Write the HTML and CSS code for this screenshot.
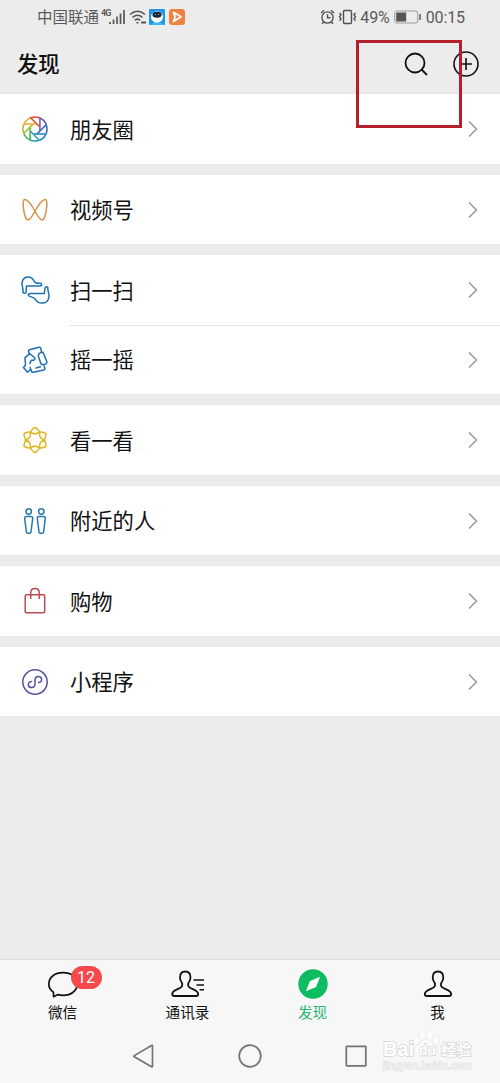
FILE: index.html
```html
<!DOCTYPE html>
<html lang="zh-CN">
<head>
<meta charset="utf-8">
<title>发现</title>
<link rel="stylesheet" href="styles.css">
</head>
<body>
<div class="phone">
  <div class="status">
    <span class="carrier">中国联通</span>
    <span class="net">4G</span>
    <svg class="signal" width="16" height="16" viewBox="0 0 16 16" stroke="#555" stroke-width="1.7"><path d="M1 13v2M4.5 10.500v4.500M8 7.500V15M11.500 4.500V15M15 1v14"/></svg>
    <svg class="wifi" width="18" height="16" viewBox="0 0 18 16" fill="none" stroke="#555" stroke-width="1.600"><path d="M1 5.500Q8.500-1 16 5.500M3.500 8.500Q8.500 4 13.500 8.500M6 11.300Q8.500 9 11 11.300"/><path d="M8.500 13v1.500M12 13.500h5" stroke-width="2"/></svg>
    <svg class="app" width="16" height="16" viewBox="0 0 16 16"><rect width="16" height="16" rx="1" fill="#2496e8"/><path d="M1 16q7-7 14 0z" fill="#38b6ee"/><ellipse cx="8" cy="8" rx="6" ry="5.800" fill="#fff"/><ellipse cx="8" cy="5.800" rx="4.600" ry="3" fill="#172330"/><circle cx="6.500" cy="5.500" r=".6" fill="#bde"/><circle cx="9.500" cy="5.500" r=".6" fill="#bde"/></svg>
    <svg class="app2" width="16" height="16" viewBox="0 0 16 16"><rect width="16" height="16" rx="3" fill="#ee8240"/><path d="M4.500 3.200L12 7.800L4.500 12.500L6 8z" fill="none" stroke="#fff" stroke-width="1.700" stroke-linejoin="round"/></svg>
    <span class="grow"></span>
    <svg width="16" height="16" viewBox="0 0 16 16" fill="none" stroke="#505050" stroke-width="1.400"><circle cx="7.500" cy="8.500" r="5.600"/><path d="M1 4l3-2.800M11 1.200L14 4M7.500 5.300v3.500h3M3.500 13L2 14.700M11.500 13l1.500 1.700"/></svg>
    <svg class="vibrate" width="19" height="16" viewBox="0 0 19 16" fill="none" stroke="#505050" stroke-width="1.400"><rect x="5.500" y="1.500" width="8" height="13" rx="1.200"/><path d="M1.500 4l1.500 1.800l-1.500 2l1.500 2l-1.500 2M17.500 4l-1.500 1.800l1.500 2l-1.500 2l1.500 2"/></svg>
    <span class="digits">49%</span>
    <svg class="battery" width="28" height="14" viewBox="0 0 28 14"><rect x=".7" y="1" width="23" height="12" rx="2" fill="none" stroke="#999"/><rect x="2.200" y="2.500" width="10" height="9" fill="#555"/><path d="M26 4v6" stroke="#666" stroke-width="1.600"/></svg>
    <span class="digits">00:15</span>
  </div>

  <header class="header">
    <h1>发现</h1>
    <svg class="search" width="26" height="26" viewBox="0 0 26 26" fill="none" stroke="#111" stroke-width="1.800"><circle cx="12" cy="12" r="9.500"/><path d="M18.500 18.500l5.500 5.500"/></svg>
    <svg width="26" height="26" viewBox="0 0 26 26" fill="none" stroke="#111" stroke-width="1.600"><circle cx="13" cy="13" r="12"/><path d="M13 7v12M7 13h12"/></svg>
  </header>

  <main class="list">
    <section class="group">
      <div class="row">
        <svg class="icon" viewBox="-15 -15 30 30" fill="none" stroke-width="1.500">
          <defs><path id="blade" d="M4.900 2V-11A12 12 0 0 1 11.300-4.300"/></defs>
          <use href="#blade" stroke="#6a59b3"/><use href="#blade" stroke="#3d6dc4" transform="rotate(45)"/><use href="#blade" stroke="#1e82c6" transform="rotate(90)"/><use href="#blade" stroke="#25a3b8" transform="rotate(135)"/><use href="#blade" stroke="#3eb34a" transform="rotate(180)"/><use href="#blade" stroke="#a9c22f" transform="rotate(225)"/><use href="#blade" stroke="#ecac2c" transform="rotate(270)"/><use href="#blade" stroke="#db4f43" transform="rotate(315)"/>
        </svg>
        <span>朋友圈</span><svg class="arrow" viewBox="0 0 10 18"><path d="M1 1.500L8.500 9L1 16.500"/></svg>
      </div>
    </section>
    <section class="group">
      <div class="row">
        <svg class="icon" viewBox="-15 -15 30 30" fill="none" stroke="#d69245" stroke-width="1.500"><path d="M0 1C-4-6-8-11-10.500-10.500C-13-9.500-11.500 2-9.500 7.500C-8 11.500-5 11 0 1C4-6 8-11 10.500-10.500C13-9.500 11.500 2 9.500 7.500C8 11.500 5 11 0 1z"/></svg>
        <span>视频号</span><svg class="arrow" viewBox="0 0 10 18"><path d="M1 1.500L8.500 9L1 16.500"/></svg>
      </div>
    </section>
    <section class="group">
      <div class="row">
        <svg class="icon" viewBox="-15 -15 30 30" fill="none" stroke="#1b71b1" stroke-width="1.500" stroke-linejoin="round" stroke-linecap="round"><path d="M-12 2.500C-11.500-1-13.200-4-13-7.500C-12-11.500-9-13.500-5-12.700C-1.500-12-2-9 .5-7.300C2.500-6.500 5-7 6.200-6.500C7.300-5.500 6.500-4 5-4H-8.500L-9 2.700Q-10.500 4-12 2.500z"/><path d="M12.800-2.500C12.500 1 14.200 3 14 6.500C13.500 10.500 11 13.300 7 13C3.500 13 1.500 11.500 .5 9.500C-1 7.500-3 7-5.500 6.200C-7.500 5.200-7 3.500-5 3.500H9.300L10-2Q11.500-4.200 12.800-2.500z"/></svg>
        <span>扫一扫</span><svg class="arrow" viewBox="0 0 10 18"><path d="M1 1.500L8.500 9L1 16.500"/></svg>
      </div>
      <div class="row divided">
        <svg class="icon" viewBox="-15 -15 30 30" fill="none" stroke="#1b71b1" stroke-width="1.500" stroke-linejoin="round" stroke-linecap="round"><path d="M-5.800-6.500L-6.500-8.800Q-6.500-9.800-5.500-10.200L4-12.700Q5.500-12.800 5.800-11.700L6.500-8.500M9 6L10 8.500Q10 9.800 8.800 10L-1.500 12.300Q-3.300 12.500-3.700 11L-4.800 7.500"/><path d="M4-6.500Q6-8 8-7.800L12 2Q11.800 3.500 10.500 4.200L7 4.700Q5.500 3.500 5 1L3.300-4zM-4.500 9.500L-7.500 12.200L-11.500 7.500L-9.500 5L-10-2.300L-5-6.300L0-2Q0 .3-1.500 .2H-3.700L-5 3.500M1 8L5.500 6.800"/></svg>
        <span>摇一摇</span><svg class="arrow" viewBox="0 0 10 18"><path d="M1 1.500L8.500 9L1 16.500"/></svg>
      </div>
    </section>
    <section class="group">
      <div class="row">
        <svg class="icon" viewBox="-15 -15 30 30" fill="none" stroke="#e0b51c" stroke-width="1.500" stroke-linejoin="round">
          <defs><path id="petal" d="M-4.500-7.900C-4-9.500-1.800-11.500-.7-12.300Q0-12.800 .7-12.300C1.800-11.500 4-9.500 4.500-7.900Q2.500-6.500 0-6Q-2.500-6.500-4.500-7.900z"/></defs>
          <use href="#petal"/><use href="#petal" transform="rotate(60)"/><use href="#petal" transform="rotate(120)"/><use href="#petal" transform="rotate(180)"/><use href="#petal" transform="rotate(240)"/><use href="#petal" transform="rotate(300)"/>
        </svg>
        <span>看一看</span><svg class="arrow" viewBox="0 0 10 18"><path d="M1 1.500L8.500 9L1 16.500"/></svg>
      </div>
    </section>
    <section class="group">
      <div class="row">
        <svg class="icon" viewBox="-15 -15 30 30" fill="none" stroke="#2478ab" stroke-width="1.500" stroke-linejoin="round"><circle cx="-6.300" cy="-9.500" r="2.700"/><circle cx="6.300" cy="-9.500" r="2.700"/><path d="M-8.500-4.500h4.500Q-2-4.500-2.300-2.500L-4 11Q-4.200 12.300-5.200 12.300h-2Q-8.400 12.300-8.600 11L-10.300-2.500Q-10.500-4.500-8.500-4.500zM4-4.500h4.500Q10.500-4.500 10.300-2.500L8.600 11Q8.400 12.300 7.200 12.300h-2Q4.200 12.300 4 11L2.300-2.500Q2-4.500 4-4.500z"/></svg>
        <span>附近的人</span><svg class="arrow" viewBox="0 0 10 18"><path d="M1 1.500L8.500 9L1 16.500"/></svg>
      </div>
    </section>
    <section class="group">
      <div class="row">
        <svg class="icon" viewBox="-15 -15 30 30" fill="none" stroke="#bd4c50" stroke-width="1.500"><rect x="-9.800" y="-6.200" width="19.500" height="18" rx="1.200"/><path d="M-4.300-2V-8Q-4.300-12.500 0-12.500Q4.300-12.500 4.300-8V-2"/></svg>
        <span>购物</span><svg class="arrow" viewBox="0 0 10 18"><path d="M1 1.500L8.500 9L1 16.500"/></svg>
      </div>
    </section>
    <section class="group">
      <div class="row">
        <svg class="icon" viewBox="-15 -15 30 30" fill="none" stroke="#5552a0" stroke-width="1.500" stroke-linecap="round"><circle r="12.200"/><path d="M-3.500-.5C-6-.2-6.800 1.500-6.600 3C-6 6.500-.5 6.500 0 2.500V-2.500C.5-6.500 6-6.500 6.600-3C6.800-1.500 6 .2 3.500.5"/></svg>
        <span>小程序</span><svg class="arrow" viewBox="0 0 10 18"><path d="M1 1.500L8.500 9L1 16.500"/></svg>
      </div>
    </section>
  </main>

  <nav class="tabs">
    <div class="tab">
      <div class="tab-icon"><svg width="32" height="32" viewBox="-16 -16 32 32" fill="none" stroke="#111" stroke-width="1.700" stroke-linejoin="round"><path d="M-9.500 8.200C-13 6-14.200 3-14.200 0C-14-7-8-11.300 0-11.300S14.200-7 14.200 0S8 11.300 0 11.300Q-2.500 11.300-5 10.600L-9.500 12.700z"/></svg><b class="badge">12</b></div>
      <span>微信</span>
    </div>
    <div class="tab">
      <div class="tab-icon"><svg width="34" height="32" viewBox="-17 -16 34 32" fill="none" stroke="#111" stroke-width="1.800" stroke-linejoin="round"><path d="M-2.800-12.500C-6.800-12.500-8-9.500-8-6.500C-8-3-5.800-1-5.800-.5V1.500C-5.800 5-15.800 5.500-15.800 10Q-15.800 12-13.500 12H8Q10.200 12 10.200 10C10.200 5.500 .2 5 .2 1.500V-.5C.2-1 2.500-3 2.500-6.500C2.500-9.500 1.200-12.500-2.800-12.500z"/><path d="M5.500-4h10.500M8.500 1h7.500M11.500 5.700h4.500" stroke-width="1.500"/></svg></div>
      <span>通讯录</span>
    </div>
    <div class="tab active">
      <div class="tab-icon"><svg width="32" height="32" viewBox="-16 -16 32 32"><circle r="14.700" fill="#0dbb61"/><path d="M7.200-7.200L3 3L-7.200 7.200L-3-3z" fill="#fff"/></svg></div>
      <span>发现</span>
    </div>
    <div class="tab">
      <div class="tab-icon"><svg width="32" height="32" viewBox="-16 -16 32 32" fill="none" stroke="#111" stroke-width="1.800" stroke-linejoin="round"><path d="M0-12.500C-4-12.500-5.300-9.500-5.300-6.500C-5.300-3-3-1-3-.5V1.500C-3 5-13.200 5.500-13.200 10Q-13.200 12-11 12H11Q13.200 12 13.200 10C13.200 5.500 3 5 3 1.500V-.5C3-1 5.300-3 5.300-6.500C5.300-9.500 4-12.500 0-12.500z"/></svg></div>
      <span>我</span>
    </div>
  </nav>

  <footer class="sysnav">
    <svg width="24" height="24" viewBox="-12 -12 24 24"><path d="M8.500-10V10.500Q8.500 11.300 7.500 10.700L-9.700 .8Q-10.500 .2-9.700-.4L7.500-10.500Q8.500-11 8.500-10z"/></svg>
    <svg width="24" height="24" viewBox="-12 -12 24 24"><circle r="10.800"/></svg>
    <svg width="24" height="24" viewBox="-12 -12 24 24"><rect x="-9.700" y="-9.700" width="19.500" height="19.500" rx=".6"/></svg>
  </footer>

  <div class="highlight"></div>
  <div class="watermark">
    <svg class="paw" width="30" height="30" viewBox="0 0 30 30"><ellipse cx="5.500" cy="11.500" rx="3" ry="3.800"/><ellipse cx="11.500" cy="5" rx="3" ry="4"/><ellipse cx="19" cy="5" rx="3" ry="4"/><ellipse cx="25" cy="11.500" rx="3" ry="3.800"/><path d="M15 11C10 11 9 15 5.500 18C2 22 4 27 9 27H21C26 27 28 22 24.500 18C21 15 20 11 15 11z"/></svg>
    <div class="mark"><span>Bai</span><span class="du">du</span><span class="cn">经验</span></div>
    <div class="url">jingyan.baidu.com</div>
  </div>
</div>
</body>
</html>
```
FILE: styles.css
```css
* { box-sizing: border-box; }
body {
  margin: 0;
  font-family: Roboto, "Noto Sans CJK SC", sans-serif;
  color: #111;
}
.phone {
  position: relative;
  display: flex;
  flex-direction: column;
  width: 500px;
  height: 1083px;
  background: #ececec;
  overflow: hidden;
}
svg { display: block; flex: none; }

.status {
  display: flex;
  align-items: center;
  height: 34px;
  padding: 0 35px 0 37px;
  color: #5a5a5a;
  font-size: 16px;
  line-height: 34px;
}
.carrier { font-size: 15.5px; width: 64px; white-space: nowrap; padding-top: 1px; }
.net { font-size: 9px; font-weight: 700; line-height: 10px; margin-bottom: 8px; width: 9px; letter-spacing: -1px; }
.signal { margin-left: -1px; }
.wifi { margin-left: 4px; }
.app { margin-left: 2px; }
.app2 { margin-left: 4px; }
.grow { flex: 1; }
.vibrate { margin: 0 3px 0 2px; }
.battery { margin: 0 4px; }
.digits { letter-spacing: -0.1px; padding-top: 1px; }

.header {
  display: flex;
  align-items: center;
  height: 60px;
  padding: 0 21px 0 17px;
  border-bottom: 1px solid #e1e1e1;
}
.header h1 { flex: 1; margin: 0; font-size: 21.3px; font-weight: 500; line-height: 30px; padding-top: 2px; }
.search { margin-right: 24px; }

.list { display: flex; flex-direction: column; gap: 11px; flex: 1; }
.group { background: #fff; box-shadow: 0 0 0 0.5px #e3e3e3; }
.row {
  display: flex;
  align-items: center;
  height: 69.5px;
  padding: 1px 22px 0 20px;
  font-size: 21.3px;
}
.row span { flex: 1; margin-left: 20px; line-height: 30px; padding-top: 3px; }
.icon { width: 30px; height: 30px; }
.arrow { width: 10px; height: 18px; fill: none; stroke: #999; stroke-width: 1.5; }
.divided {
  background: linear-gradient(#e5e5e5, #e5e5e5) 69px 0 / 431px 1px no-repeat;
}

.tabs {
  display: flex;
  height: 69px;
  background: #f7f7f7;
  border-top: 1px solid #dcdcdc;
  padding-top: 8px;
}
.tab { flex: 1; display: flex; flex-direction: column; align-items: center; font-size: 14.6px; line-height: 22px; }
.tab > span { margin-top: 2px; }
.tab-icon { position: relative; height: 32px; }
.active { color: #2ab571; }
.badge {
  position: absolute;
  left: 24px;
  top: -2px;
  width: 31px;
  height: 23px;
  border-radius: 12px;
  background: #f5494e;
  color: #fff;
  font-size: 16px;
  font-weight: 400;
  line-height: 24px;
  text-align: center;
}
.sysnav {
  display: flex;
  justify-content: space-between;
  height: 55px;
  padding: 16px 132px 0;
  background: #f7f7f7;
}
.sysnav svg { fill: none; stroke: #737373; stroke-width: 1.7; }

.highlight {
  position: absolute;
  left: 356px;
  top: 40px;
  width: 106px;
  height: 88px;
  border: 3px solid #b51e2b;
}
.watermark {
  position: absolute;
  left: 383px;
  top: 1029px;
  width: 92px;
  height: 46px;
  color: #fff;
  -webkit-text-stroke: 1.6px #d8d8d8;
  paint-order: stroke fill;
}
.mark { position: relative; display: flex; align-items: center; height: 24px; margin-top: 8px; font: 700 20px/24px "Liberation Sans", sans-serif; }
.mark .du { font-size: 14px; width: 27px; text-align: center; padding-top: 2px; }
.mark .cn { font: 700 15px/24px "Noto Sans CJK SC", sans-serif; white-space: nowrap; }
.url { font: 11px/12px "Liberation Sans", sans-serif; margin-top: -2px; color: #f3f3f3; -webkit-text-stroke: 1px #dedede; white-space: nowrap; }
.paw { position: absolute; left: 28px; top: 0; fill: #fdfdfd; stroke: #dadada; stroke-width: 0.8; }
```
